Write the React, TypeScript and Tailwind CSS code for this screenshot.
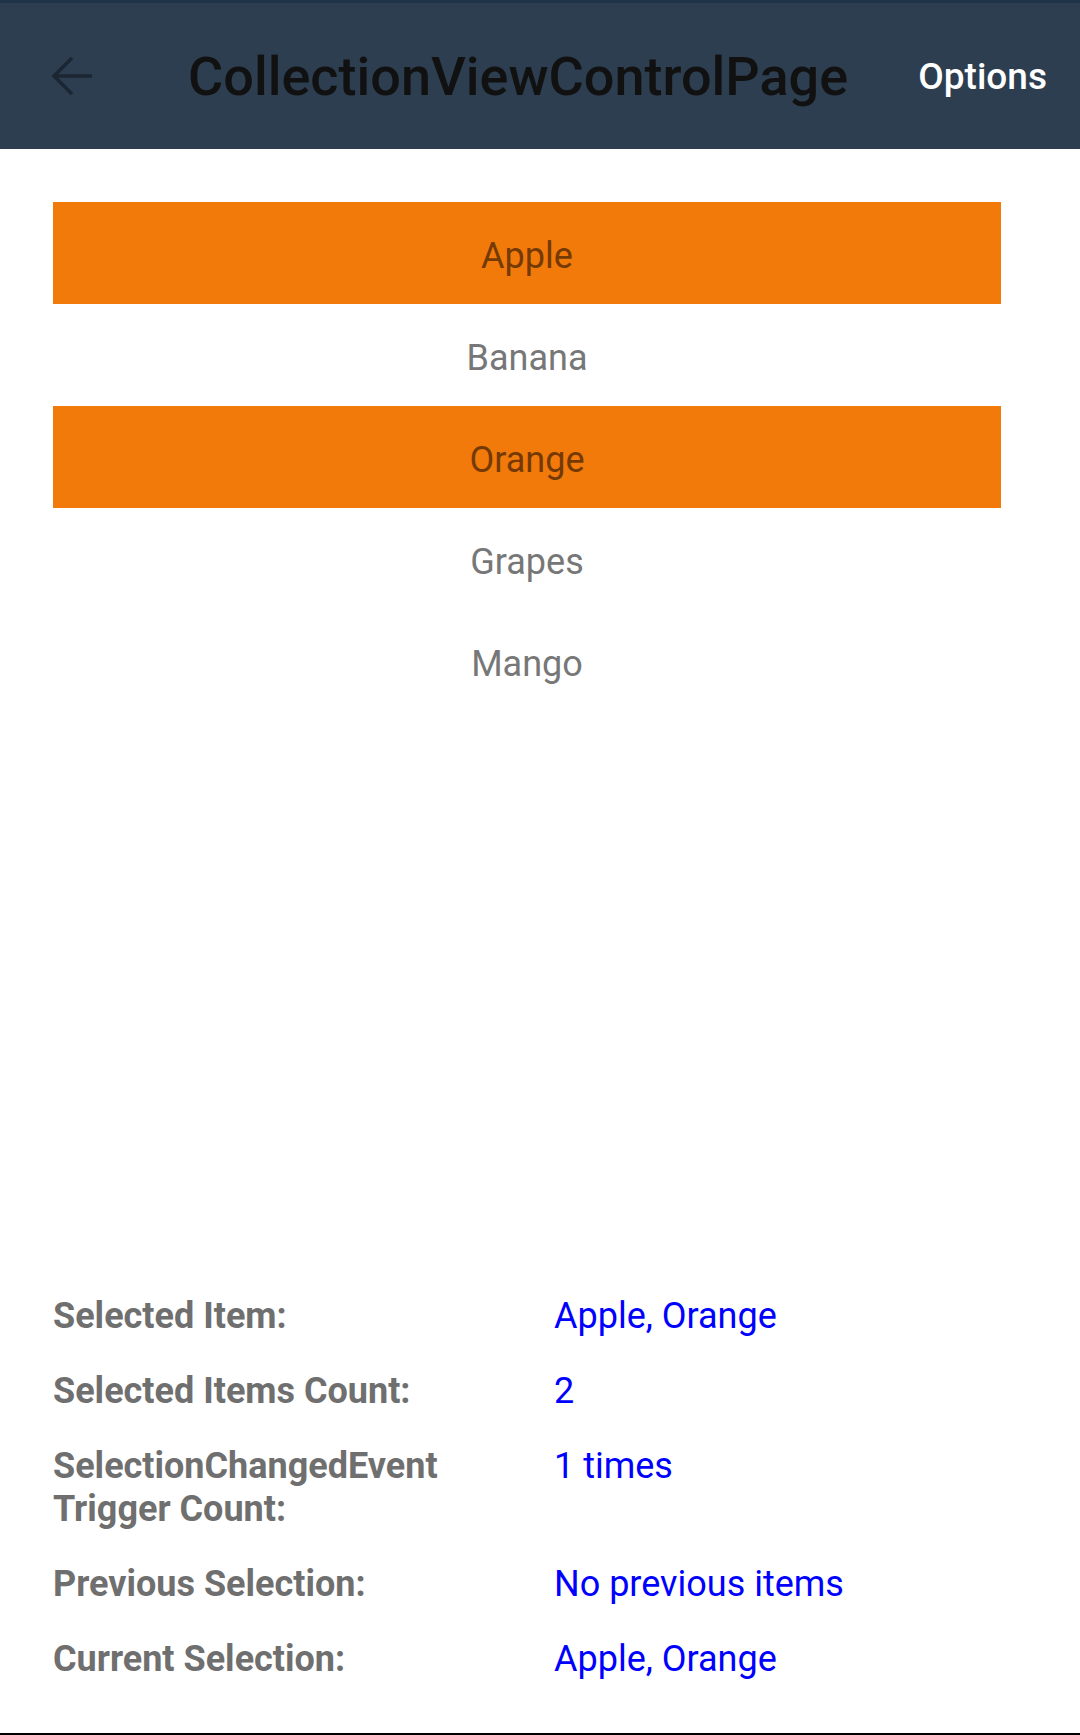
import React from "react";

const items = [
  { name: "Apple", selected: true },
  { name: "Banana", selected: false },
  { name: "Orange", selected: true },
  { name: "Grapes", selected: false },
  { name: "Mango", selected: false },
];

const rows: { label: string; value: string }[] = [
  { label: "Selected Item:", value: "Apple, Orange" },
  { label: "Selected Items Count:", value: "2" },
  { label: "SelectionChangedEvent Trigger Count:", value: "1 times" },
  { label: "Previous Selection:", value: "No previous items" },
  { label: "Current Selection:", value: "Apple, Orange" },
];

export default function App() {
  return (
    <div
      className="w-[1080px] h-[1735px] flex flex-col bg-white overflow-hidden"
      style={{ fontFamily: "Roboto, 'Noto Sans', sans-serif" }}
    >
      <div className="h-[3px] bg-[#1f3349]" />
      <header className="h-[146px] bg-[#2c3e50] flex items-center">
        <div className="w-[188px] pl-[50px] flex items-center">
          <svg width="44" height="44" viewBox="0 0 44 44" fill="none">
            <path
              d="M42 22H5M22 4L4 22l18 18"
              stroke="#1b2632"
              strokeWidth="3.6"
              strokeLinecap="butt"
              strokeLinejoin="miter"
            />
          </svg>
        </div>
        <div className="flex-1 text-[54px] font-medium text-[#111111] leading-none pt-[2px]">
          CollectionViewControlPage
        </div>
        <div className="pr-[33px] text-[37px] font-medium text-white leading-none">
          Options
        </div>
      </header>

      <div className="pt-[53px] mx-[53px] w-[948px] flex flex-col">
        {items.map((it) => (
          <div
            key={it.name}
            className={`h-[102px] pt-[6px] flex items-center justify-center text-[36px] ${
              it.selected ? "bg-[#f27a0b] text-[#753a04]" : "text-[#777777]"
            }`}
          >
            {it.name}
          </div>
        ))}
      </div>

      <div className="mt-auto pl-[53px] pb-[52px] flex flex-col gap-[32px]">
        {rows.map((r, i) => (
          <div key={i} className="grid grid-cols-[480px_1fr] gap-x-[21px] text-[36px] leading-[43px]">
            <div className="font-bold text-[#6f6f6f]">{r.label}</div>
            <div className="text-[#0000ff]">{r.value}</div>
          </div>
        ))}
      </div>
      <div className="h-[2px] bg-black" />
    </div>
  );
}
